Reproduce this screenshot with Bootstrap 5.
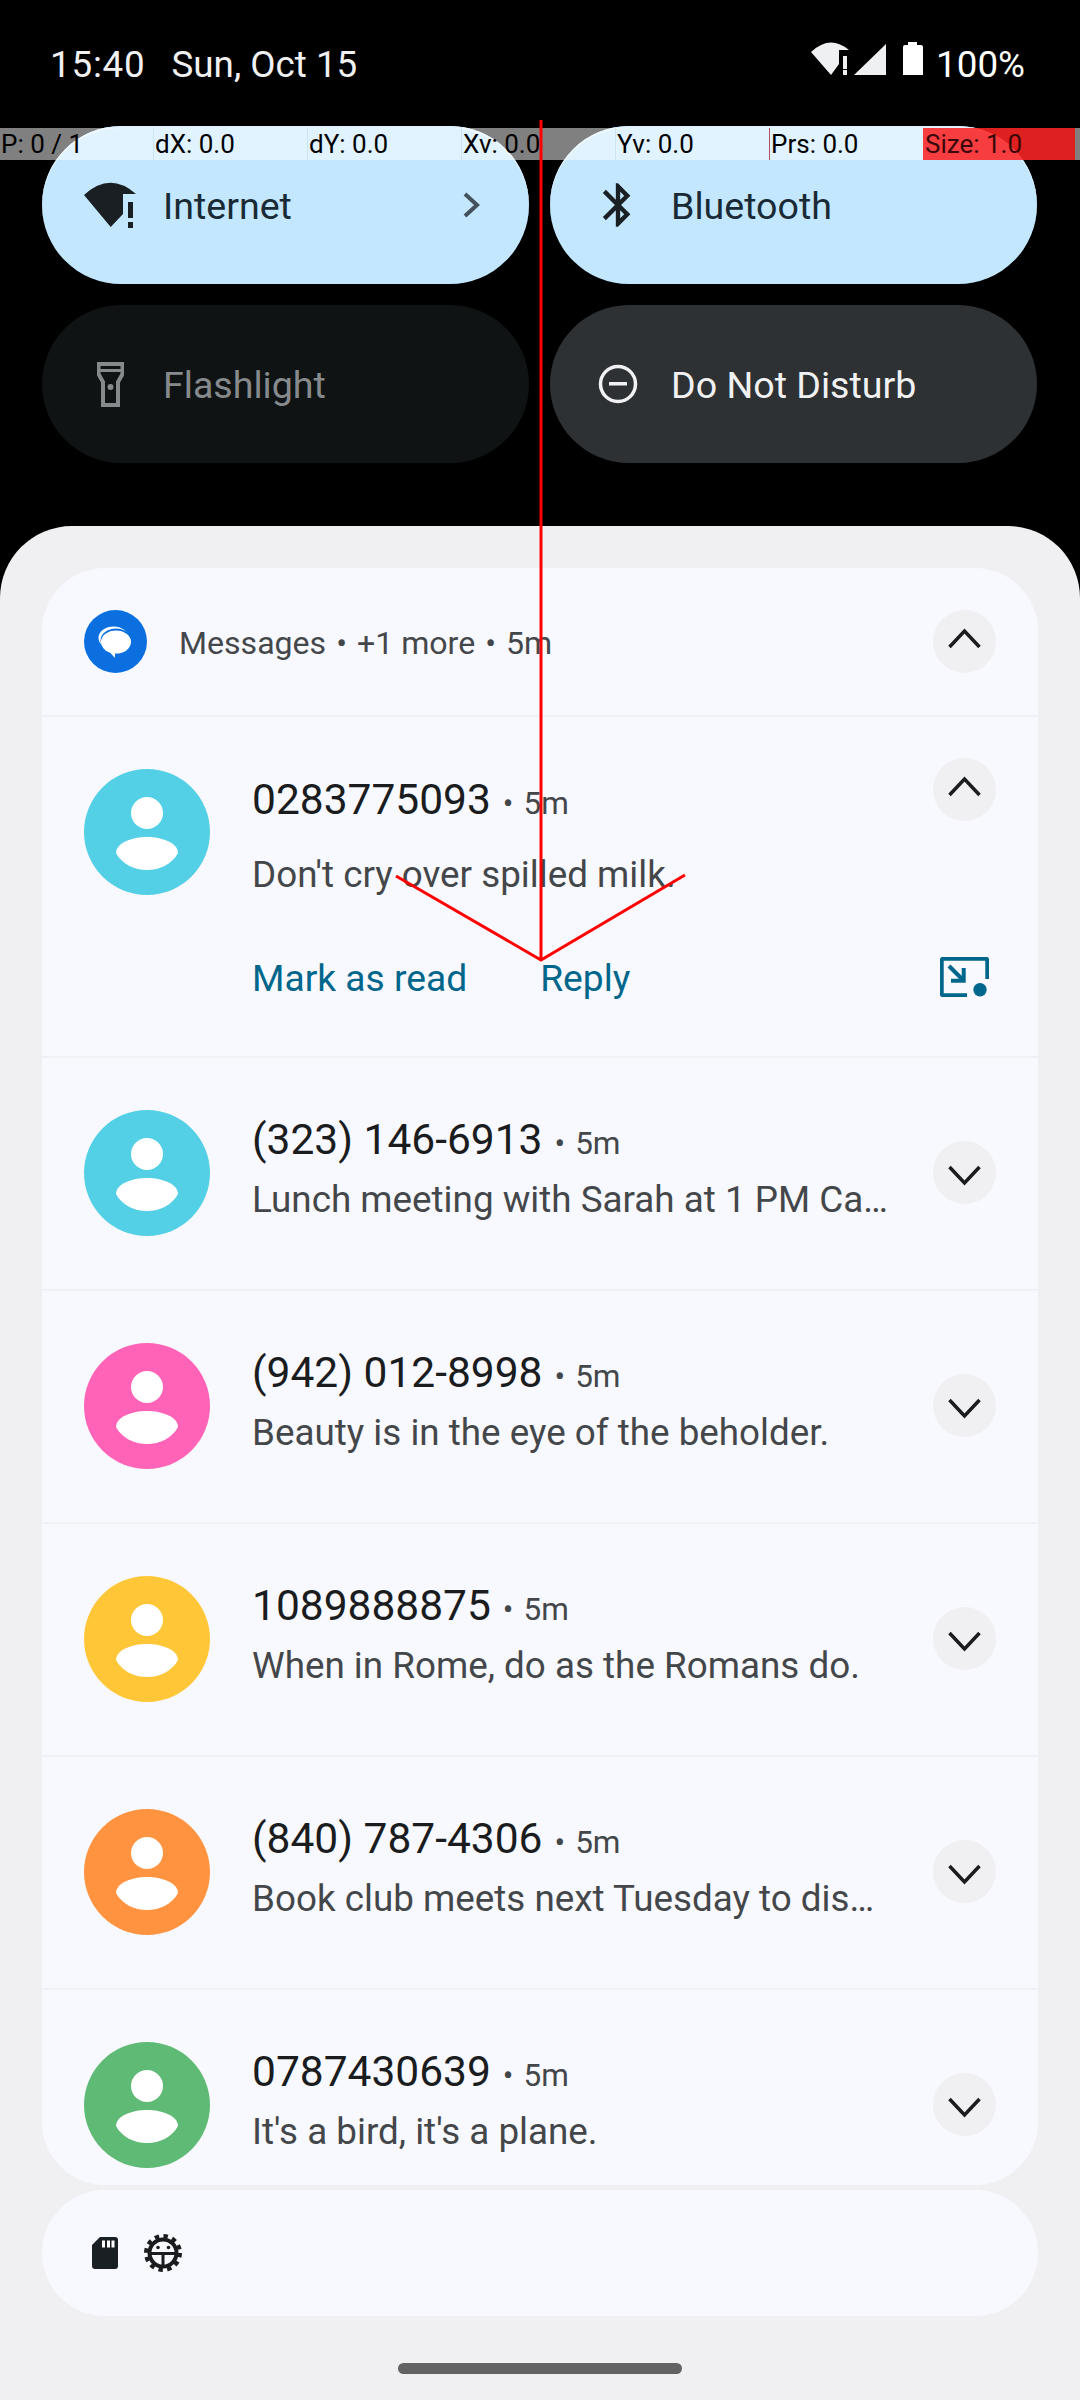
<!DOCTYPE html>
<html lang="en">
<head>
  <meta charset="UTF-8">
  <title>Notification shade</title>
  <meta name="viewport" content="width=device-width, initial-scale=1">
  <link href="https://cdn.jsdelivr.net/npm/bootstrap@5.3.3/dist/css/bootstrap.min.css" rel="stylesheet">
  <style>
    body { background: #000; font-family: Roboto, "Noto Sans", sans-serif; }
    .shade { width: 1080px; height: 2400px; overflow: hidden; position: relative; }

    .status-line { height: 126px; padding: 45px 55px 0 50px; color: #f1f1f3; font-size: 36.75px; line-height: 40px; }
    .status-time { letter-spacing: .8px; }
    .status-date { margin-left: 26px; }
    .status-pct { margin-left: 13px; color: #fff; }
    .status-icons { margin-top: -3px; }

    .tile-grid { display: grid; grid-template-columns: 487px 487px; column-gap: 21px; row-gap: 21px; padding-left: 42px; }
    .tile { height: 158px; border-radius: 79px; padding-left: 40px; font-size: 37.6px; }
    .tile span { position: relative; top: 1px; }
    .tile-on { background: #c2e7ff; color: #1a2a35; box-shadow: inset 0 2px 0 #dff2ff; }
    .tile-off { background: #101313; color: #868a8d; }
    .tile-idle { background: #2d3134; color: #f1f1f3; }
    .tile-icon { flex-shrink: 0; }
    .icon-wifi { margin: 0 25px 0 2px; }
    .icon-bt { margin: 0 27px 0 2px; }
    .icon-flash { margin: 0 39px 0 15px; }
    .icon-dnd { margin: 0 33px 0 8px; }
    .tile-chev { margin-left: auto; margin-right: 49px; }

    .panel { margin-top: 63px; height: 1874px; background: #f0f0f3; border-radius: 72px 72px 0 0; padding: 42px 42px 0; }
    .group-card { background: #f8f9fe; border-radius: 63px; height: 1617px; overflow: hidden; }
    .group-head { height: 149px; padding: 42px 42px 0; border-bottom: 2px solid #f0f1f4; color: #44474a; font-size: 32.1px; line-height: 63px; }
    .head-text { margin: 2px 0 0 32px; }
    .head-sep { margin: 0 10px; }
    .msg-row { height: 233px; padding: 0 42px 2px; border-bottom: 2px solid #f0f1f4; }
    .msg-open { height: 341px; padding-top: 52px; padding-bottom: 0; }
    .avatar { width: 126px; height: 126px; flex-shrink: 0; display: block; }
    .msg-text { margin: 0 0 5.5px 42px; flex-grow: 1; min-width: 0; white-space: nowrap; }
    .msg-title { color: #1a1c1e; font-size: 42.5px; line-height: 50px; }
    .msg-time { color: #44474a; font-size: 31.5px; }
    .msg-dot { color: #44474a; font-size: 31.5px; margin: 0 10px 0 12px; }
    .msg-body { color: #44474a; font-size: 36.8px; line-height: 50px; margin-top: 5.5px; }
    .msg-open .msg-text { margin-bottom: 0; }
    .msg-open .msg-title { margin-top: 6px; }
    .msg-open .msg-body { margin-top: 21px; }
    .msg-acts { color: #00668b; font-size: 37.2px; margin-top: 53px; line-height: 50px; }
    .msg-acts span + span { margin-left: 73px; }
    .expand-btn { width: 63px; height: 63px; border-radius: 50%; background: #f0f0f2; flex-shrink: 0; display: block; }
    .msg-open .expand-btn { margin-top: -11px; }
    .bubble-act { margin-top: 136px; }

    .foot-card { background: #f8f9fe; border-radius: 63px; height: 126px; margin-top: 5px; padding-left: 50px; gap: 26px; }
    .home-bar { width: 284px; height: 11px; border-radius: 6px; background: #636363; margin: 47px auto 0; }

    /* pointer debug strip, sits over the tiles */
    .ptr-strip { position: absolute; left: 0; top: 128px; width: 1080px; height: 32px; background: rgba(255,255,255,.5); color: #000; font-size: 26px; line-height: 32px; }
    .ptr-col { width: 154px; padding-left: 1px; white-space: nowrap; border-left: 1px solid rgba(160,200,215,.35); }
    .ptr-col:first-child { border-left: 0; width: 153px; }
    .ptr-prs { border-left-color: #b2505f; }
    .ptr-size { width: 152px; padding-left: 2px; background: rgba(255,0,0,.75); border-left: 0; color: #3a0808; }
    .ptr-trace { position: absolute; left: 0; top: 0; }
  </style>
</head>
<body>
  <div class="shade">
    <div class="status-line d-flex align-items-start">
      <span class="status-time">15:40</span><span class="status-date">Sun, Oct 15</span>
      <div class="ms-auto d-flex align-items-start">
        <svg class="status-icons" width="76" height="40" viewBox="0 0 76 40"><path d="M0 10Q19-8 38 8H28V22L20 33Z" fill="#eff0f2"/><rect x="32" y="14" width="4" height="13" fill="#eff0f2"/><rect x="32" y="28" width="4" height="5" fill="#eff0f2"/><path d="M43 33L75 2V33Z" fill="#eff0f2"/></svg>
        <svg class="status-icons ms-3" width="20" height="34" viewBox="0 0 20 34"><path d="M5 0H14V3H18Q20 3 20 5V33H0V5Q0 3 2 3H5Z" fill="#fff"/></svg>
        <span class="status-pct">100%</span>
      </div>
    </div>

    <div class="tile-grid">
      <div class="tile tile-on d-flex align-items-center">
        <svg class="tile-icon icon-wifi" width="54" height="48" viewBox="0 0 54 48"><path d="M0 14Q26-10 52 13H39V33L26.700 46Z" fill="#1a1f23"/><rect x="44" y="21" width="5" height="16" fill="#1a1f23"/><rect x="44" y="41" width="5" height="6" fill="#1a1f23"/></svg>
        <span>Internet</span>
        <svg class="tile-chev" width="18" height="26" viewBox="0 0 18 26"><path d="M3 2L15 13L3 24" fill="none" stroke="#44505a" stroke-width="4"/></svg>
      </div>
      <div class="tile tile-on d-flex align-items-center">
        <svg class="tile-icon icon-bt" width="52" height="52" viewBox="0 0 24 24"><path d="M17.710 7.710L12 2h-1v7.590L6.410 5 5 6.410 10.590 12 5 17.590 6.410 19 11 14.410V22h1l5.710-5.710-4.300-4.290 4.300-4.290zM13 5.830l1.880 1.880L13 9.590V5.830zm1.880 10.460L13 18.170v-3.760l1.880 1.880z" fill="#1a1f23"/></svg>
        <span>Bluetooth</span>
      </div>
      <div class="tile tile-off d-flex align-items-center">
        <svg class="tile-icon icon-flash" width="27" height="45" viewBox="0 0 27 45"><path d="M1.500 2H25.500V12L21 20V43H6V20L1.500 12Z" fill="none" stroke="#868a8d" stroke-width="4"/><rect x="2" y="7" width="23" height="3" fill="#868a8d"/><circle cx="13.500" cy="25" r="3" fill="#868a8d"/></svg>
        <span>Flashlight</span>
      </div>
      <div class="tile tile-idle d-flex align-items-center">
        <svg class="tile-icon icon-dnd" width="40" height="40" viewBox="0 0 40 40"><circle cx="20" cy="20" r="17.500" fill="none" stroke="#f1f1f3" stroke-width="3.500"/><rect x="11" y="18" width="18" height="3.500" fill="#f1f1f3"/></svg>
        <span>Do Not Disturb</span>
      </div>
    </div>

    <div class="panel">
      <div class="group-card">
        <div class="group-head d-flex align-items-start">
          <svg width="63" height="63" viewBox="0 0 63 63" class="flex-shrink-0"><circle cx="31.500" cy="31.500" r="31.500" fill="#0b6fe0"/><ellipse cx="29.500" cy="28" rx="15" ry="11.500" fill="#fff"/><ellipse cx="32" cy="30.500" rx="15.500" ry="12" fill="#0b6fe0"/><ellipse cx="32" cy="32" rx="15" ry="11.500" fill="#fff"/><path d="M22 38L31 48V41Z" fill="#fff"/></svg>
          <span class="head-text">Messages<span class="head-sep">•</span>+1 more<span class="head-sep">•</span>5m</span>
          <svg class="expand-btn ms-auto" viewBox="0 0 63 63"><path d="M16.500 37L31.500 21L46.500 37" fill="none" stroke="#1a1c1e" stroke-width="3.500"/></svg>
        </div>

        <div class="msg-row msg-open d-flex align-items-start">
          <svg class="avatar" viewBox="0 0 126 126"><circle cx="63" cy="63" r="63" fill="#53cfe6"/><circle cx="63" cy="44" r="16" fill="#fff"/><path d="M32 84C32 74 48 68 63 68S94 74 94 84C88 95 76 101 63 101S38 95 32 84Z" fill="#fff"/></svg>
          <div class="msg-text">
            <div class="msg-title">0283775093<span class="msg-dot">•</span><span class="msg-time">5m</span></div>
            <div class="msg-body">Don't cry over spilled milk.</div>
            <div class="msg-acts d-flex"><span>Mark as read</span><span>Reply</span></div>
          </div>
          <div class="d-flex flex-column align-items-center">
            <svg class="expand-btn" viewBox="0 0 63 63"><path d="M16.500 37L31.500 21L46.500 37" fill="none" stroke="#1a1c1e" stroke-width="3.500"/></svg>
            <svg class="bubble-act" width="49" height="40" viewBox="0 0 49 40"><path d="M47.300 22V3.500Q47.300 1.700 45.500 1.700H3.500Q1.700 1.700 1.700 3.500V36.500Q1.700 38.300 3.500 38.300H27" fill="none" stroke="#00668b" stroke-width="4"/><path d="M9 9L22 22" fill="none" stroke="#00668b" stroke-width="4"/><path d="M23.700 11V23.700H11" fill="none" stroke="#00668b" stroke-width="4"/><circle cx="40" cy="32.700" r="6.700" fill="#00668b"/></svg>
          </div>
        </div>

        <div id="msg-list"></div>
      </div>

      <div class="foot-card d-flex align-items-center">
        <svg width="26" height="32" viewBox="0 0 26 32"><path d="M8 0H23Q26 0 26 3V29Q26 32 23 32H3Q0 32 0 29V8Z" fill="#1a1f23"/><rect x="10" y="3.500" width="3" height="7" fill="#fff"/><rect x="15" y="3.500" width="3" height="7" fill="#fff"/><rect x="19.500" y="3.500" width="3" height="7" fill="#fff"/></svg>
        <svg width="38" height="38" viewBox="0 0 38 38"><circle cx="19" cy="19" r="17" fill="none" stroke="#1a1c1e" stroke-width="4" stroke-dasharray="4.450 4.450"/><circle cx="19" cy="19" r="13.500" fill="none" stroke="#1a1c1e" stroke-width="4"/><path d="M6 19.500H32M19 19.500V32" stroke="#1a1c1e" stroke-width="3"/><circle cx="14" cy="13.500" r="1.800" fill="#1a1c1e"/><circle cx="24.500" cy="13.500" r="1.800" fill="#1a1c1e"/></svg>
      </div>
      <div class="home-bar"></div>
    </div>

    <div class="ptr-strip d-flex">
      <div class="ptr-col">P: 0 / 1</div>
      <div class="ptr-col">dX: 0.0</div>
      <div class="ptr-col">dY: 0.0</div>
      <div class="ptr-col">Xv: 0.0</div>
      <div class="ptr-col">Yv: 0.0</div>
      <div class="ptr-col ptr-prs">Prs: 0.0</div>
      <div class="ptr-col ptr-size">Size: 1.0</div>
    </div>
    <svg class="ptr-trace" width="1080" height="1000" viewBox="0 0 1080 1000"><path d="M541 120V960M396 876L541 960L685 875" fill="none" stroke="#ff0000" stroke-width="3"/></svg>
  </div>

  <script src="https://cdn.jsdelivr.net/npm/bootstrap@5.3.3/dist/js/bootstrap.bundle.min.js"></script>
  <script>
    const rows = [
      ['(323) 146-6913', 'Lunch meeting with Sarah at 1 PM Ca…', '#53cfe6'],
      ['(942) 012-8998', 'Beauty is in the eye of the beholder.', '#ff63b8'],
      ['1089888875', 'When in Rome, do as the Romans do.', '#ffc738'],
      ['(840) 787-4306', 'Book club meets next Tuesday to dis…', '#ff9340'],
      ['0787430639', "It's a bird, it's a plane.", '#5fba75']
    ];
    document.getElementById('msg-list').innerHTML = rows.map(([title, body, color]) => `
      <div class="msg-row d-flex align-items-center">
        <svg class="avatar" viewBox="0 0 126 126"><circle cx="63" cy="63" r="63" fill="${color}"/><circle cx="63" cy="44" r="16" fill="#fff"/><path d="M32 84C32 74 48 68 63 68S94 74 94 84C88 95 76 101 63 101S38 95 32 84Z" fill="#fff"/></svg>
        <div class="msg-text">
          <div class="msg-title">${title}<span class="msg-dot">•</span><span class="msg-time">5m</span></div>
          <div class="msg-body">${body}</div>
        </div>
        <svg class="expand-btn" viewBox="0 0 63 63"><path d="M16.500 26L31.500 42L46.500 26" fill="none" stroke="#1a1c1e" stroke-width="3.500"/></svg>
      </div>`).join('');
  </script>
</body>
</html>
